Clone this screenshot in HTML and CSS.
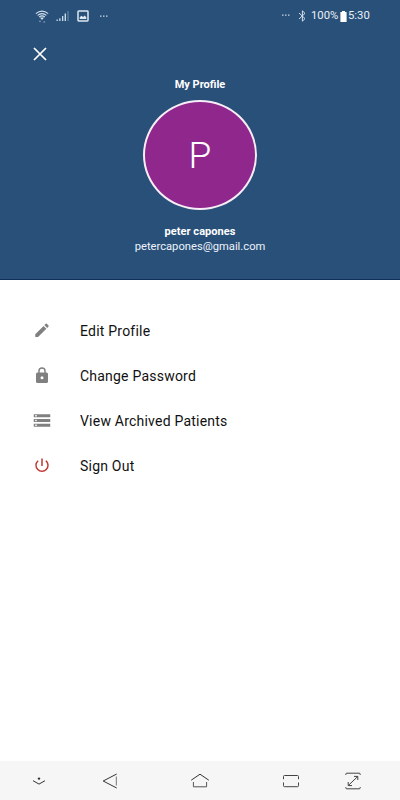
FILE: index.html
```html
<!DOCTYPE html>
<html lang="en">
<head>
<meta charset="utf-8">
<title>My Profile</title>
<link rel="stylesheet" href="styles.css">
</head>
<body>
<header class="header">
  <div class="status">
    <svg class="wifi" width="14" height="13" viewBox="0 0 14 13" fill="none" stroke="#d5e2ee" stroke-width="1.1">
      <path d="M.8 3.6Q7-1.4 13.2 3.6M2.6 5.4Q7 1.8 11.4 5.4M4.2 7Q7 4.8 9.8 7"/>
      <path d="M5 7.4h4L7 10z" fill="#d5e2ee" stroke="none"/>
      <path d="M3.8 10.8h2.4L5 12.6zM8 12.6h2.4L9.2 10.8z" fill="#87a0b9" stroke="none"/>
    </svg>
    <svg class="signal" width="13" height="12" viewBox="0 0 13 12">
      <path d="M.5 9.5h1.3V11H.5zM3.2 8.2h1.3V11H3.2zM6 6h1.3v5H6zM8.6 3.5H10V11H8.6z" fill="#c9dcea"/>
      <path d="M11.4 1h1.2v10h-1.2z" fill="#6488a7"/>
    </svg>
    <svg class="photo" width="12" height="12" viewBox="0 0 12 12">
      <rect x="1" y="1" width="10" height="10" rx=".7" fill="none" stroke="#dce7f2" stroke-width="1.5"/>
      <path d="M2.7 9V7.2l1.8-1.5 1.6 1.4 1.6-1.6 1.6 1.7V9z" fill="#dce7f2"/>
    </svg>
    <svg class="dots-left" width="8" height="2" viewBox="0 0 8 2" fill="#c5d4e2"><path d="M0 .4h1.5v1.3H0zM3 .4h1.5v1.3H3zM6 .4h1.5v1.3H6z"/></svg>
    <svg class="dots-right" width="8" height="2" viewBox="0 0 8 2" fill="#c5d4e2"><path d="M0 .4h1.5v1.3H0zM3 .4h1.5v1.3H3zM6 .4h1.5v1.3H6z"/></svg>
    <svg class="bluetooth" width="9" height="12" viewBox="0 0 9 12" fill="none" stroke="#d0deeb" stroke-width="1"><path d="M1 3l6 5.6-2.6 2.6V.8L7 3.4 1 9"/></svg>
    <span class="percent">100%</span>
    <svg class="battery" width="7" height="11" viewBox="0 0 7 11" fill="#fff"><path d="M2 0h3v1h1.6v10H.4V1H2z"/></svg>
    <span class="clock">5:30</span>
  </div>
  <svg class="close" width="14" height="14" viewBox="0 0 14 14" fill="none" stroke="#fff" stroke-width="1.7"><path d="M1 1l12 12M13 1L1 13"/></svg>
  <h1 class="title">My Profile</h1>
  <div class="avatar">P</div>
  <div class="name">peter capones</div>
  <div class="email">petercapones@gmail.com</div>
</header>
<main class="menu">
  <div class="item">
    <svg class="icon" viewBox="0 0 24 24"><path d="M3 16.25V20h3.75L17.81 8.94l-3.75-3.75L3 16.25zM20.71 6.04a1 1 0 0 0 0-1.41l-2.34-2.34a1 1 0 0 0-1.41 0l-1.83 1.83 3.75 3.75 1.83-1.83z"/></svg>
    <span class="label">Edit Profile</span>
  </div>
  <div class="item">
    <svg class="icon" viewBox="0 0 24 24"><path d="M18 7.3h-1v-2a5 5 0 0 0-10 0v2H6a2 2 0 0 0-2 2v10a2 2 0 0 0 2 2h12a2 2 0 0 0 2-2v-10a2 2 0 0 0-2-2zm-6 9a2 2 0 1 1 0-4 2 2 0 0 1 0 4zm3.1-9H8.9v-2a3.1 3.1 0 0 1 6.2 0v2z"/></svg>
    <span class="label">Change Password</span>
  </div>
  <div class="item">
    <svg class="icon" viewBox="0 0 24 24"><path d="M1 19.7h22v-4.2H1v4.2zm2-3.1h2v2H3v-2zM1 2.9v4.2h22V2.9H1zM5 6H3V4h2v2zM1 13.4h22V9.2H1v4.2zm2-3.1h2v2H3v-2z"/></svg>
    <span class="label">View Archived Patients</span>
  </div>
  <div class="item">
    <svg class="icon power" viewBox="0 0 24 24"><path d="M13 2h-2v10h2V2zm4.83 2.17l-1.42 1.42A6.92 6.92 0 0 1 19 11a7 7 0 1 1-11.42-5.42L6.17 4.17A8.93 8.93 0 0 0 3 11a9 9 0 0 0 18 0c0-2.74-1.23-5.18-3.17-6.83z"/></svg>
    <span class="label">Sign Out</span>
  </div>
</main>
<footer class="nav">
  <svg class="hide" width="14" height="10" viewBox="0 0 14 10" fill="none" stroke="#333"><path d="M1 4.7l6 3.4 6-3.4"/><circle cx="7" cy="2.6" r="1.2" fill="#333" stroke="none"/></svg>
  <svg class="back" width="16" height="16" viewBox="0 0 16 16" fill="none" stroke="#333"><path d="M14.7 1L1.2 8l13.5 7"/><path d="M14.3 3.5v9" stroke="#777"/></svg>
  <svg class="home" width="20" height="15" viewBox="0 0 20 15" fill="none" stroke="#333"><path d="M1.2 7.2L10 1.2l8.8 6"/><path d="M3.4 9v4.8h13.2V9" stroke="#555"/></svg>
  <svg class="recent" width="18" height="14" viewBox="0 0 18 14" fill="none" stroke="#444"><path d="M1.5 5.2V2.5q0-1 1-1h13q1 0 1 1v2.7M1.5 8.5v3.2q0 1 1 1h13q1 0 1-1V8.5"/></svg>
  <svg class="expand" width="16" height="18" viewBox="0 0 16 18" fill="none" stroke="#444"><path d="M.8 3V2.2q0-1 1-1h12.4q1 0 1 1V3M.8 15v.8q0 1 1 1h12.4q1 0 1-1V15M3.2 13.6l9.6-9.2M9 4.4h3.8V8M3.2 10v3.6H7"/></svg>
</footer>
</body>
</html>
```
FILE: styles.css
```css
* { box-sizing: border-box; }
body {
  margin: 0;
  height: 800px;
  display: flex;
  flex-direction: column;
  overflow: hidden;
  background: #fff;
  font-family: Roboto, sans-serif;
}
svg { display: block; flex: none; }
.header {
  height: 280px;
  display: flex;
  flex-direction: column;
  align-items: center;
  background: #295079;
  border-bottom: 1px solid #0f3059;
  color: #fff;
}
.status {
  width: 100%;
  height: 32px;
  display: flex;
  align-items: center;
  padding-left: 35px;
  color: #e9f0f7;
  font-size: 11.3px;
  line-height: 14px;
  white-space: nowrap;
}
.signal { margin-left: 7px; }
.photo { margin-left: 8px; }
.dots-left { margin-left: 11px; }
.dots-right { margin: -3px 0 0 174px; }
.bluetooth { margin-left: 8px; }
.percent { width: 28px; margin-left: 4px; }
.battery { margin-left: 1px; }
.clock { margin-left: 1px; }
.close { align-self: flex-start; margin: 15px 0 0 33px; }
.title { margin: 17px 0 0; font-size: 11px; line-height: 14px; font-weight: 700; }
.avatar {
  width: 114px;
  height: 110px;
  margin-top: 8px;
  border: 2px solid #f6edf7;
  border-radius: 50%;
  background: #8f278c;
  font-size: 37px;
  font-weight: 300;
  line-height: 107px;
  text-align: center;
}
.name { margin-top: 15px; font-size: 11px; line-height: 14px; font-weight: 700; letter-spacing: .05px; }
.email { font-size: 11.2px; line-height: 15px; color: #edf3f9; }
.menu { flex: 1; padding-top: 28px; }
.item { height: 45.2px; display: flex; align-items: center; padding-left: 33.4px; }
.icon { width: 18px; height: 18px; margin-right: 28.6px; fill: #808080; }
.power { fill: #bf3930; }
.label { font-size: 14px; line-height: 20px; letter-spacing: .22px; color: #111; }
.nav { height: 39px; display: flex; align-items: center; background: #f6f6f6; }
.hide { margin-left: 32px; }
.back { margin-left: 56px; }
.home { margin-left: 72px; }
.recent { margin-left: 72px; }
.expand { margin-left: 44.6px; }
```
